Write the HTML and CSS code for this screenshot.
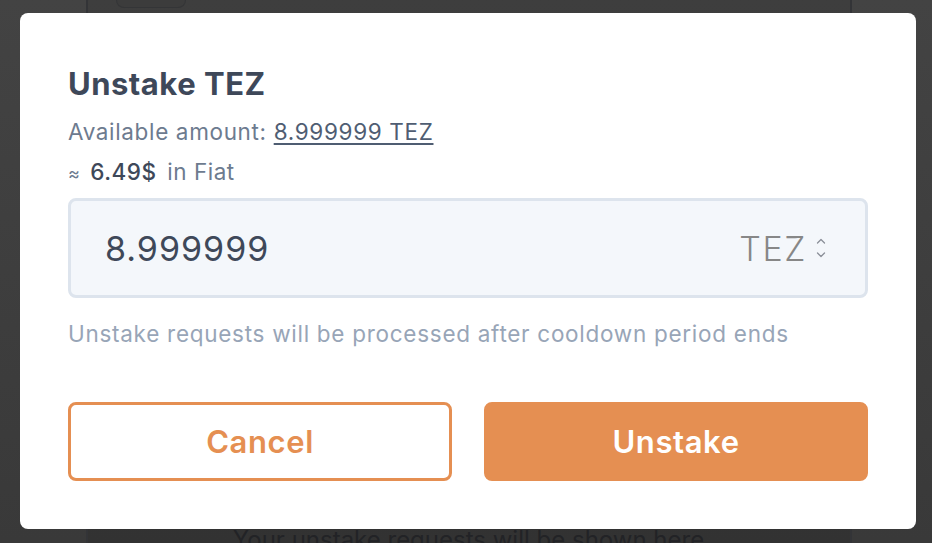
FILE: index.html
```html
<!DOCTYPE html>
<html>
<head>
<meta charset="utf-8">
<link rel="stylesheet" href="styles.css">
</head>
<body>
<div class="page">
  <div class="column">
    <div class="tab"></div>
    <div class="spacer"></div>
    <p class="empty">Your unstake requests will be shown here</p>
  </div>
</div>
<div class="modal">
  <h1 class="title">Unstake TEZ</h1>
  <p class="available">Available amount: <a class="amount">8.999999 TEZ</a></p>
  <p class="fiat"><span class="approx">≈</span> <span class="fiat-value">6.49$</span> in Fiat</p>
  <div class="input">
    <span class="value">8.999999</span>
    <span class="unit">TEZ</span>
    <svg class="chev" width="12" height="24" viewBox="0 0 12 24" fill="none" stroke="#8a8f98" stroke-width="1.3" stroke-linecap="round" stroke-linejoin="round">
      <path d="M2.5 7 L6 3.5 L9.5 7"/>
      <path d="M2.5 17 L6 20.5 L9.5 17"/>
    </svg>
  </div>
  <p class="hint">Unstake requests will be processed after cooldown period ends</p>
  <div class="actions">
    <button class="btn btn-outline">Cancel</button>
    <button class="btn btn-solid">Unstake</button>
  </div>
</div>
</body>
</html>
```
FILE: styles.css
```css
html, body {
  margin: 0;
  padding: 0;
  height: 100%;
}
body {
  background: linear-gradient(#434343, #393939);
  font-family: Inter, "Noto Sans", sans-serif;
  overflow: hidden;
}
.page {
  height: 543px;
  display: flex;
  justify-content: center;
}
.column {
  width: 762px;
  margin-left: 5px;
  border-left: 2px solid #333437;
  border-right: 2px solid #333437;
  background: linear-gradient(#3e3e3e, #323232);
  display: flex;
  flex-direction: column;
}
.tab {
  width: 68px;
  height: 7px;
  margin-left: 28px;
  border: 1px solid #343537;
  border-top: none;
  border-radius: 0 0 8px 8px;
  background: #3c3c3c;
}
.spacer { flex: 1; }
.empty {
  margin: 0 0 -12px;
  text-align: center;
  font-size: 24px;
  color: #222326;
  line-height: 30px;
}
.modal {
  position: absolute;
  left: 20px;
  top: 13px;
  width: 896px;
  height: 516px;
  box-sizing: border-box;
  background: #fff;
  border-radius: 8px;
  padding: 53px 48px 48px;
  display: flex;
  flex-direction: column;
}
.title {
  margin: 0;
  font-size: 31px;
  line-height: 36px;
  font-weight: 700;
  letter-spacing: 0.5px;
  color: #3e4859;
}
.available {
  margin: 16px 0 0;
  font-size: 22.5px;
  line-height: 28px;
  letter-spacing: 0.65px;
  color: #6d7b8f;
}
.amount {
  color: #4f5d72;
  text-decoration: underline;
  text-underline-offset: 3px;
  text-decoration-thickness: 1.5px;
}
.fiat {
  margin: 12px 0 0;
  font-size: 22.5px;
  line-height: 28px;
  letter-spacing: 0.5px;
  color: #6d7b8f;
}
.approx { font-size: 18px; }
.fiat-value {
  color: #3e4859;
  font-weight: 500;
  margin: 0 4px 0 3px;
}
.input {
  margin-top: 10px;
  height: 100px;
  box-sizing: border-box;
  border: 3px solid #dde4ed;
  border-radius: 8px;
  background: #f4f7fb;
  display: flex;
  align-items: center;
  padding: 0 38px 0 34px;
}
.value {
  flex: 1;
  font-size: 34px;
  letter-spacing: 1px;
  color: #3e4859;
}
.unit {
  font-size: 34px;
  letter-spacing: 1.6px;
  color: #878787;
  font-weight: 300;
}
.chev {
  margin-left: 8px;
}
.hint {
  margin: 22px 0 0;
  font-size: 22.5px;
  line-height: 28px;
  letter-spacing: 0.72px;
  color: #98a5b7;
}
.actions {
  margin-top: 54px;
  display: grid;
  grid-template-columns: 1fr 1fr;
  gap: 32px;
}
.btn {
  height: 79px;
  border-radius: 8px;
  font-family: Inter, "Noto Sans", sans-serif;
  font-size: 31px;
  font-weight: 600;
  letter-spacing: 0.6px;
  cursor: pointer;
}
.btn-outline {
  background: #fff;
  border: 3px solid #e58f52;
  color: #e58f52;
}
.btn-solid {
  background: #e58f52;
  border: 3px solid #e58f52;
  color: #fff;
}
```
